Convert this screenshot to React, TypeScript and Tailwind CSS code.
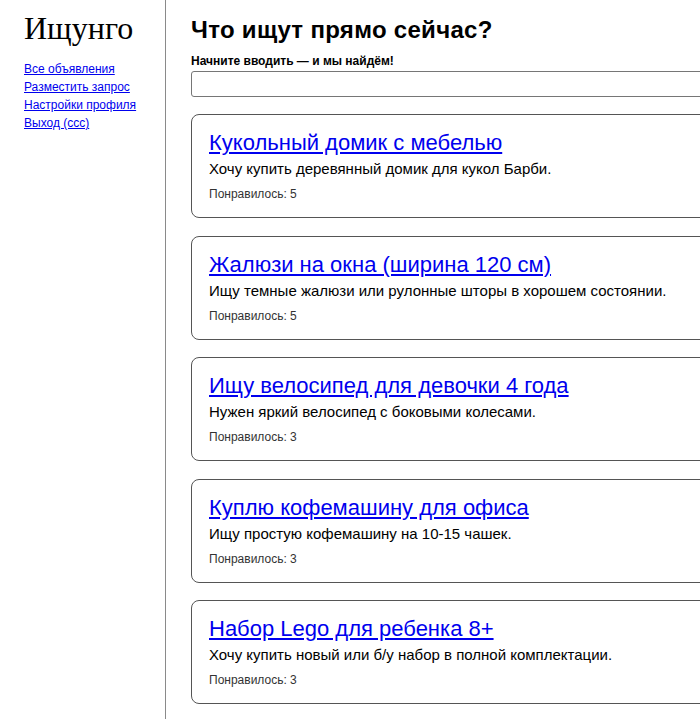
import React from 'react';

const requests = [
  { title: 'Кукольный домик с мебелью', text: 'Хочу купить деревянный домик для кукол Барби.', likes: 5 },
  { title: 'Жалюзи на окна (ширина 120 см)', text: 'Ищу темные жалюзи или рулонные шторы в хорошем состоянии.', likes: 5 },
  { title: 'Ищу велосипед для девочки 4 года', text: 'Нужен яркий велосипед с боковыми колесами.', likes: 3 },
  { title: 'Куплю кофемашину для офиса', text: 'Ищу простую кофемашину на 10-15 чашек.', likes: 3 },
  { title: 'Набор Lego для ребенка 8+', text: 'Хочу купить новый или б/у набор в полной комплектации.', likes: 3 },
];

const links = ['Все объявления', 'Разместить запрос', 'Настройки профиля', 'Выход (ссс)'];

export default function App() {
  return (
    <div className="flex h-[719px] w-[700px] overflow-hidden bg-white font-['Liberation_Sans',Arial,sans-serif] text-black">
      {/* Sidebar */}
      <aside className="w-[166px] shrink-0 border-r border-[#8a8a8a] pl-6 pt-[10px]">
        <div className="font-['Liberation_Serif','Times_New_Roman',serif] text-[32px] leading-[36px]">Ищунго</div>
        <nav className="mt-[14px] flex flex-col">
          {links.map((l) => (
            <a key={l} href="#" className="text-[12px] leading-[18px] text-[#0000ee] underline">
              {l}
            </a>
          ))}
        </nav>
      </aside>

      {/* Main */}
      <main className="w-[560px] shrink-0 pl-[25px] pt-[14px]">
        <h1 className="text-[24px] font-bold leading-[32px] tracking-[0.3px]">Что ищут прямо сейчас?</h1>
        <label className="mt-[8px] block text-[12px] font-bold leading-[15px]">Начните вводить — и мы найдём!</label>
        <input className="mt-[2px] block h-[26px] w-full rounded-[3px] border border-[#767676] px-1 text-[14px] outline-none" />

        <div className="mt-[17px] flex flex-col gap-[17.5px]">
          {requests.map((r) => (
            <div key={r.title} className="h-[104px] rounded-[8px] border border-[#555] px-[17px] pt-[14px]">
              <a href="#" className="block text-[22px] leading-[27px] text-[#0000ee] underline">
                {r.title}
              </a>
              <p className="mt-[3px] text-[15px] leading-[20px]">{r.text}</p>
              <p className="mt-[8px] text-[12px] leading-[14px] text-[#333]">Понравилось: {r.likes}</p>
            </div>
          ))}
        </div>
      </main>
    </div>
  );
}
